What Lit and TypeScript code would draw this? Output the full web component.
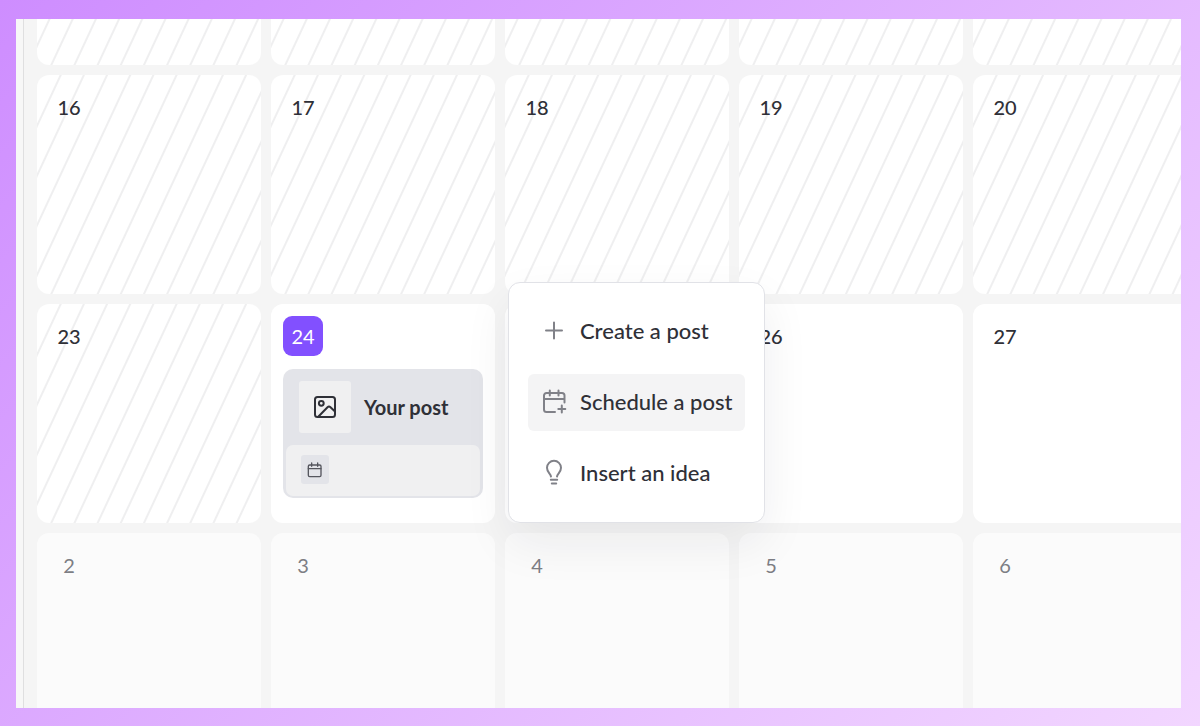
import { LitElement, html, svg, css, nothing } from "lit";
import { customElement, property } from "lit/decorators.js";
import { classMap } from "lit/directives/class-map.js";

type DayState = "past" | "today" | "open" | "outside";

interface Day {
  label: string;
  state: DayState;
  menu?: boolean;
}

const icons = {
  plus: svg`<path d="M12 3.500v16M4 11.500h16" />`,
  schedule: svg`<path d="M13 22H4.500A2.500 2.500 0 0 1 2 19.500V5.500A2.500 2.500 0 0 1 4.500 3h15.500a2.500 2.500 0 0 1 2.500 2.500V12.500M2 9h20.500M7.800 .500v5M16.500 .500v5M19.800 15.500v7M16.300 19h7" />`,
  idea: svg`<path d="M9 15.500C8.600 12.600 5 11.500 5 6.800a7 7 0 0 1 14 0c0 4.700-3.600 5.800-4 8.700M8.800 18.700h6.400M9.800 22.600h4.400" />`,
  image: svg`<rect x="2" y="2" width="20" height="20" rx="2.500" /><circle cx="8.300" cy="8.300" r="2.400" /><path d="M5 22 14.500 12.200a2.200 2.200 0 0 1 3 0L22 16.500" />`,
  calendar: svg`<rect x="2" y="4.500" width="19" height="17.500" rx="2" /><path d="M2 10h19M7 1.500v5M16 1.500v5" />`,
};

@customElement("line-icon")
class LineIcon extends LitElement {
  @property() name: keyof typeof icons = "plus";

  static styles = css`
    :host {
      display: block;
      width: 24px;
      height: 24px;
      flex: none;
    }
    .glyph {
      display: block;
      width: 100%;
      height: 100%;
      fill: none;
      stroke: currentColor;
      stroke-width: 2;
      stroke-linecap: round;
      stroke-linejoin: round;
      overflow: visible;
    }
  `;

  render() {
    return html`<svg class="glyph" viewBox="0 0 24 24" aria-hidden="true">${icons[this.name]}</svg>`;
  }
}

@customElement("post-card")
class PostCard extends LitElement {
  static styles = css`
    :host {
      display: block;
    }
    .card {
      padding: 0 3px 2px;
      border-radius: 10px;
      background: #e3e4e9;
      color: #2f3037;
    }
    .summary {
      display: flex;
      align-items: center;
      gap: 13px;
      padding: 12px 13px;
    }
    .thumb {
      display: grid;
      place-items: center;
      width: 52px;
      height: 52px;
      border-radius: 3px;
      background: #f0f0f1;
    }
    .title {
      margin: 0;
      font-size: 20px;
      line-height: 24px;
      font-weight: 700;
      white-space: nowrap;
    }
    .footer {
      padding: 10px 15px 12px;
      border-radius: 7px;
      background: #f0f0f1;
    }
    .slot {
      display: grid;
      place-items: center;
      width: 28px;
      height: 29px;
      border-radius: 3px;
      background: #e3e4e9;
      color: #55565e;
    }
    .small {
      width: 16px;
      height: 16px;
    }
  `;

  render() {
    return html`
      <article class="card">
        <div class="summary">
          <span class="thumb"><line-icon name="image"></line-icon></span>
          <h3 class="title">Your post</h3>
        </div>
        <div class="footer">
          <span class="slot"><line-icon class="small" name="calendar"></line-icon></span>
        </div>
      </article>
    `;
  }
}

@customElement("day-menu")
class DayMenu extends LitElement {
  static styles = css`
    :host {
      display: block;
    }
    .menu {
      display: flex;
      flex-direction: column;
      gap: 14px;
      box-sizing: border-box;
      padding: 20px 19px;
      border: 1px solid #e1e2e7;
      border-radius: 12px;
      background: #fff;
      box-shadow: 0 20px 48px rgba(24, 24, 48, 0.07);
    }
    .item {
      display: flex;
      align-items: center;
      gap: 14px;
      height: 57px;
      padding: 0 14px 2px;
      border: 0;
      border-radius: 6px;
      background: transparent;
      color: #2f3037;
      font: inherit;
      font-size: 22px;
      line-height: 28px;
      font-weight: 500;
      text-align: left;
      white-space: nowrap;
      cursor: pointer;
    }
    .item.active,
    .item:hover {
      background: #f4f4f5;
    }
    .icon {
      color: #808188;
    }
  `;

  render() {
    const items: { icon: keyof typeof icons; label: string; active?: boolean }[] = [
      { icon: "plus", label: "Create a post" },
      { icon: "schedule", label: "Schedule a post", active: true },
      { icon: "idea", label: "Insert an idea" },
    ];
    return html`
      <div class="menu" role="menu">
        ${items.map(
          (item) => html`
            <button type="button" role="menuitem" class=${classMap({ item: true, active: !!item.active })}>
              <line-icon class="icon" name=${item.icon}></line-icon>
              <span>${item.label}</span>
            </button>
          `,
        )}
      </div>
    `;
  }
}

@customElement("app-root")
class AppRoot extends LitElement {
  static styles = css`
    :host {
      display: flex;
      box-sizing: border-box;
      height: 100vh;
      padding: 19px 19px 18px 16px;
      background: linear-gradient(135deg, #ce8dff, #f2d6ff);
      font-family: Lato, "Liberation Sans", sans-serif;
    }
    .window {
      display: flex;
      flex: 1;
      min-width: 0;
      overflow: hidden;
      background: #f5f5f5;
    }
    .rail {
      flex: none;
      width: 7px;
      border-right: 1px solid #dfdfe0;
      background: #f7f7f7;
    }
    .grid {
      display: grid;
      flex: 1;
      grid-template-columns: repeat(5, minmax(0, 1fr));
      grid-template-rows: 46px 219px 219px minmax(0, 1fr);
      gap: 10px;
      margin: 0 -16px 0 13px;
    }
    .day {
      position: relative;
      box-sizing: border-box;
      padding: 12px;
      border-radius: 12px;
      background: #fff;
      color: #2f3037;
    }
    .day.first {
      border-radius: 0 0 12px 12px;
    }
    .day.last {
      border-radius: 12px 12px 0 0;
    }
    .day.past {
      background: #fff
        repeating-linear-gradient(115deg, #efeff0 0, #efeff0 1px, #fff 2px, #fff 20px, #efeff0 21px)
        left bottom / 100% 219px no-repeat;
    }
    .day.outside {
      background: #fbfbfb;
      color: #7d7e84;
    }
    .day.anchor {
      z-index: 1;
    }
    .date {
      display: grid;
      place-items: center;
      width: 40px;
      height: 40px;
      border-radius: 9px;
      font-size: 20px;
      line-height: 24px;
      font-weight: 500;
    }
    .outside .date {
      font-weight: 400;
    }
    .today .date {
      background: #8250ff;
      color: #fff;
      font-weight: 400;
    }
    .post {
      margin-top: 13px;
    }
    .popup {
      position: absolute;
      top: -22px;
      left: 3px;
      width: 257px;
    }
  `;

  private days: Day[] = [
    ...["", "", "", "", ""].map((label): Day => ({ label, state: "past" })),
    ...["16", "17", "18", "19", "20"].map((label): Day => ({ label, state: "past" })),
    { label: "23", state: "past" },
    { label: "24", state: "today" },
    { label: "25", state: "open", menu: true },
    { label: "26", state: "open" },
    { label: "27", state: "open" },
    ...["2", "3", "4", "5", "6"].map((label): Day => ({ label, state: "outside" })),
  ];

  private renderDay(day: Day, index: number) {
    const classes = {
      day: true,
      [day.state]: true,
      first: index < 5,
      last: index >= 15,
      anchor: !!day.menu,
    };
    return html`
      <section class=${classMap(classes)}>
        ${day.label && !day.menu ? html`<time class="date">${day.label}</time>` : nothing}
        ${day.state === "today" ? html`<post-card class="post"></post-card>` : nothing}
        ${day.menu ? html`<day-menu class="popup"></day-menu>` : nothing}
      </section>
    `;
  }

  render() {
    return html`
      <main class="window">
        <div class="rail"></div>
        <div class="grid">${this.days.map((day, index) => this.renderDay(day, index))}</div>
      </main>
    `;
  }
}
